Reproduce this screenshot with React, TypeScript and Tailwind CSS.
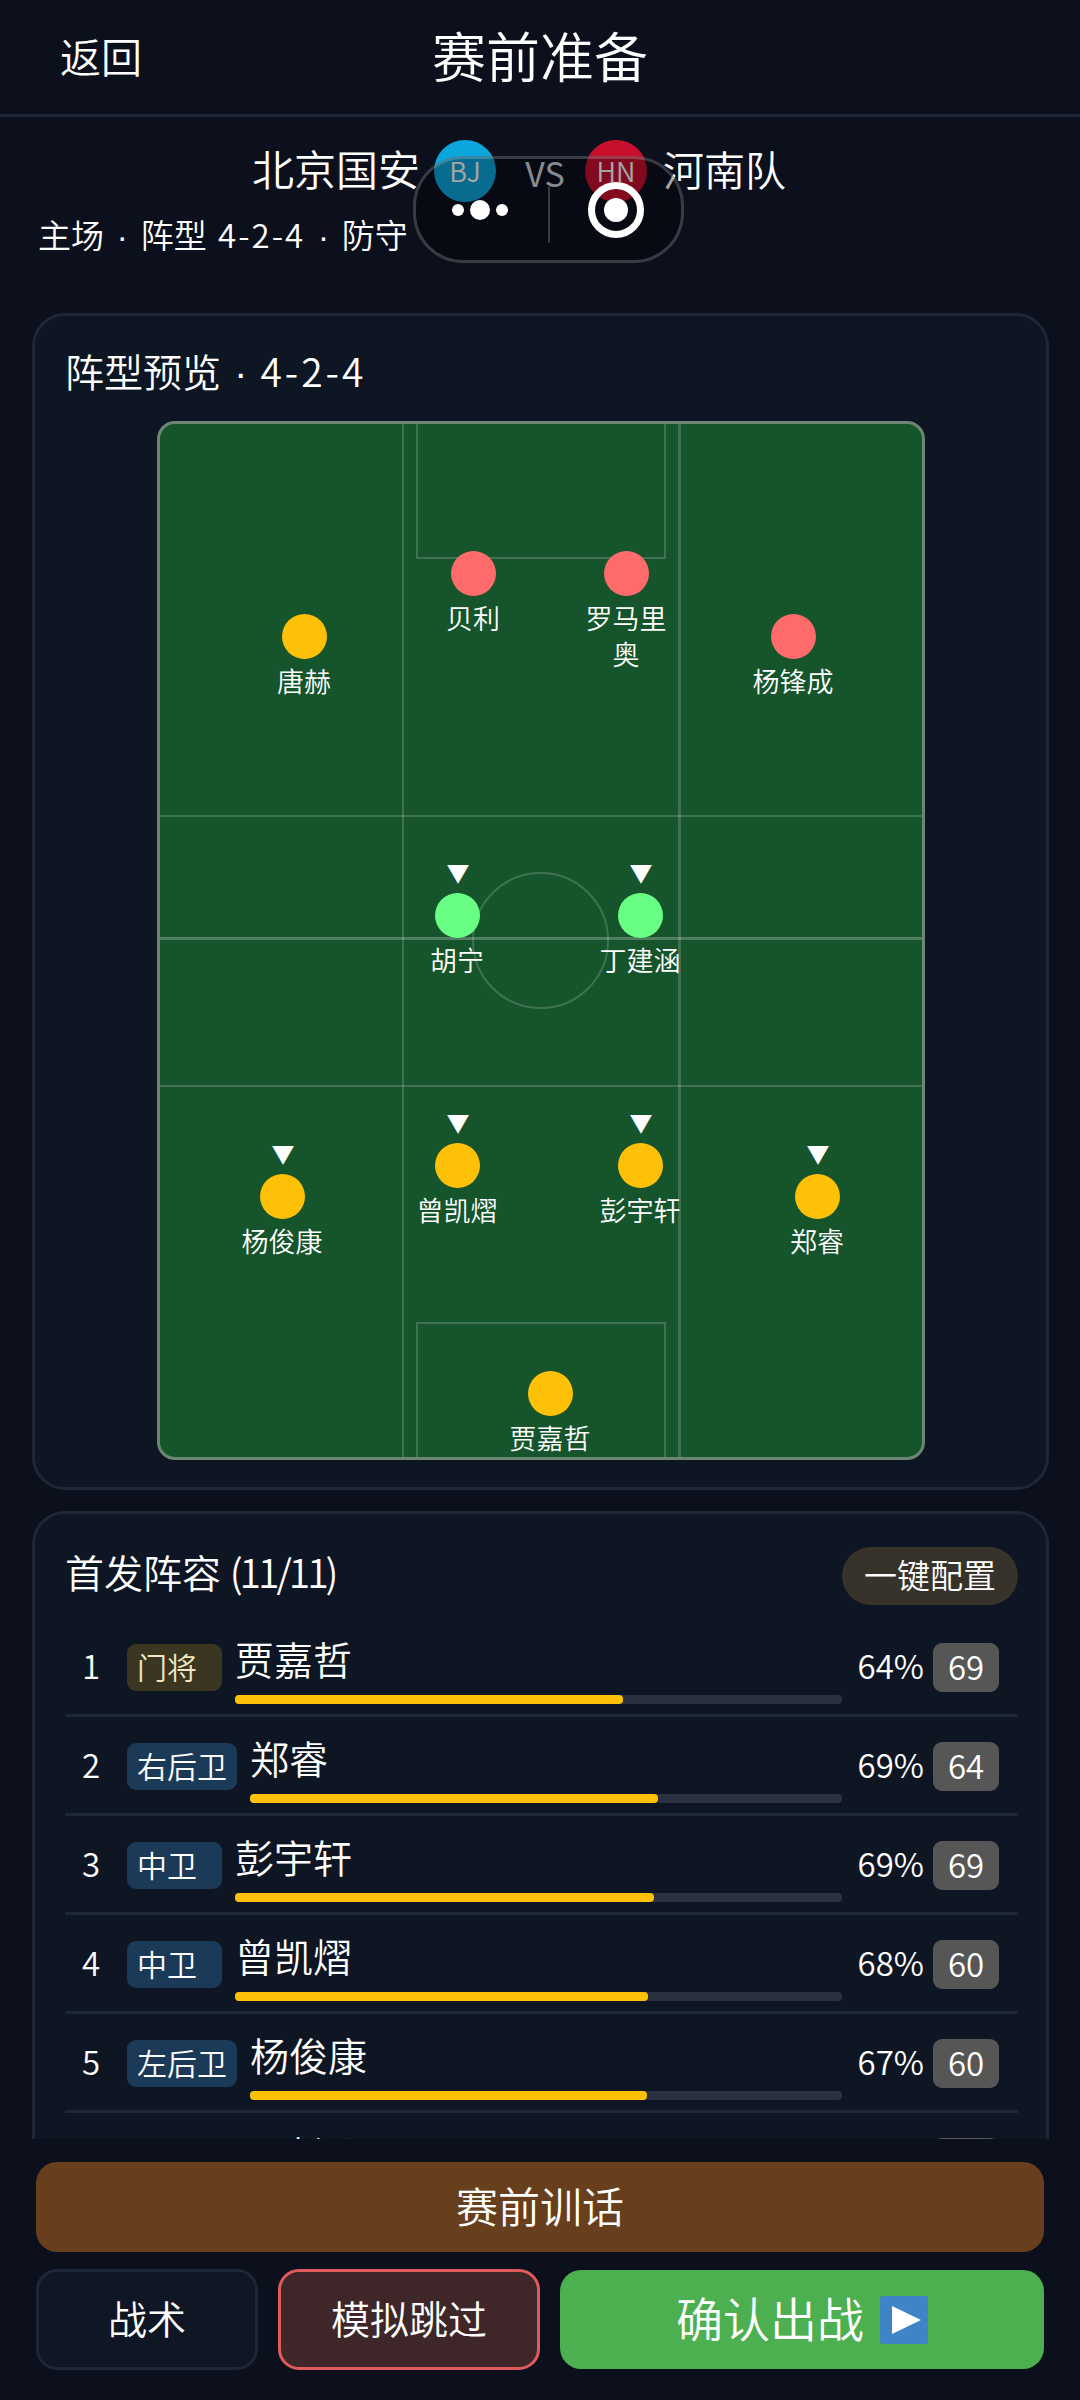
const players = [
  { name: '贝利', x: 473, y: 573, c: 'bg-[#ff6b6b]' },
  { name: '罗马里奥', x: 626, y: 573, c: 'bg-[#ff6b6b]' },
  { name: '唐赫', x: 304, y: 636, c: 'bg-[#ffc107]' },
  { name: '杨锋成', x: 793, y: 636, c: 'bg-[#ff6b6b]' },
  { name: '胡宁', x: 457, y: 915, c: 'bg-[#69ff84]', arrow: true },
  { name: '丁建涵', x: 640, y: 915, c: 'bg-[#69ff84]', arrow: true },
  { name: '杨俊康', x: 282, y: 1196, c: 'bg-[#ffc107]', arrow: true },
  { name: '曾凯熠', x: 457, y: 1165, c: 'bg-[#ffc107]', arrow: true },
  { name: '彭宇轩', x: 640, y: 1165, c: 'bg-[#ffc107]', arrow: true },
  { name: '郑睿', x: 817, y: 1196, c: 'bg-[#ffc107]', arrow: true },
  { name: '贾嘉哲', x: 550, y: 1393, c: 'bg-[#ffc107]' },
];

const rows = [
  { n: 1, pos: '门将', gk: true, name: '贾嘉哲', pct: 64, r: 69 },
  { n: 2, pos: '右后卫', name: '郑睿', pct: 69, r: 64 },
  { n: 3, pos: '中卫', name: '彭宇轩', pct: 69, r: 69 },
  { n: 4, pos: '中卫', name: '曾凯熠', pct: 68, r: 60 },
  { n: 5, pos: '左后卫', name: '杨俊康', pct: 67, r: 60 },
  { n: 6, pos: '中场', name: '丁建涵', pct: 66, r: 62 },
];

function Dot() {
  return <span className="inline-block w-[22px] text-center font-['Liberation_Sans'] leading-none">·</span>;
}

function Player({ p }: { p: (typeof players)[number] }) {
  return (
    <div
      className="absolute flex w-[100px] flex-col items-center"
      style={{ left: p.x - 160 - 50, top: p.y - 424 - 22 }}
    >
      {p.arrow && (
        <span className="absolute -top-[36px] left-[1px] w-full text-center text-[23px] leading-[30px] text-white">▼</span>
      )}
      <div className={`h-[45px] w-[45px] rounded-full ${p.c}`} />
      <div className="mt-[4px] w-[90px] text-center text-[27px] leading-[36px] text-white">{p.name}</div>
    </div>
  );
}

function Row({ r }: { r: (typeof rows)[number] }) {
  return (
    <div className="flex h-[99px] shrink-0 items-center border-b-[3px] border-[#1e2738] pr-[19px] pt-[3px]">
      <div className="-mt-[3px] w-[62px] shrink-0 pl-[17px] text-[33px] text-white">{r.n}</div>
      <div
        className={`h-[47px] min-w-[95px] shrink-0 rounded-[9px] px-[10px] text-[30px] leading-[44px] ${
          r.gk ? 'bg-[#3b3621] text-[#f0e8c0]' : 'bg-[#1b3a58] text-white'
        }`}
      >
        {r.pos}
      </div>
      <div className="ml-[13px] flex min-w-0 flex-1 flex-col self-start pt-[14px]">
        <div className="text-[39px] leading-[46px] text-white">{r.name}</div>
        <div className="mt-[14px] h-[9px] rounded-[4px] bg-[#2a3242]">
          <div className="h-full rounded-[4px] bg-[#ffc107]" style={{ width: `${r.pct}%` }} />
        </div>
      </div>
      <div className="-mt-[3px] ml-[13px] w-[69px] shrink-0 text-right text-[33px] text-white">{r.pct}%</div>
      <div className="ml-[9px] h-[49px] w-[66px] shrink-0 rounded-[9px] bg-[#565656] text-center text-[33px] leading-[46px] text-white">
        {r.r}
      </div>
    </div>
  );
}

export default function App() {
  return (
    <div
      className="relative flex h-[2400px] w-[1080px] flex-col overflow-hidden bg-[#0b101c] font-[350] text-white"
      style={{ fontFamily: '"Noto Sans CJK SC", "Noto Sans", sans-serif' }}
    >
      <header className="relative flex h-[117px] shrink-0 items-center justify-center border-b-[3px] border-[#1e2738]">
        <span className="absolute left-[60px] -mt-[3px] text-[41px]">返回</span>
        <h1 className="-mt-[5px] text-[54px] font-[350]">赛前准备</h1>
      </header>

      <main className="min-h-0 flex-1 overflow-hidden">
        <section className="h-[196px] pt-[23px]">
          <div className="flex h-[62px] items-center pl-[252px]">
            <span className="-mt-[6px] text-[42px] leading-none">北京国安</span>
            <span className="ml-[14px] flex h-[62px] w-[62px] items-center justify-center rounded-full bg-[#0ca6dc] text-[27px]">BJ</span>
            <span className="ml-[29px] mt-[2px] w-[40px] text-center text-[34px] font-normal text-[#cfd6dc]">VS</span>
            <span className="ml-[20px] flex h-[62px] w-[62px] items-center justify-center rounded-full bg-[#c8102e] text-[27px]">HN</span>
            <span className="-mt-[6px] ml-[16px] text-[41px] leading-none">河南队</span>
          </div>
          <div className="mt-[9px] pl-[38px] text-[33px] leading-[46px] text-white">
            主场 <Dot /> 阵型 <span className="ml-[4px] tracking-[2px]">4-2-4</span> <Dot /> 防守
          </div>
        </section>

        <div className="ml-[32px] mr-[31px] h-[1177px] rounded-[33px] border-[3px] border-[#1e2738] bg-[#0f1623] pl-[30px] pr-[28px] pt-[33px]">
          <h2 className="-mt-[3px] text-[39px] font-[350] leading-[48px]">
            阵型预览 <Dot /> <span className="tracking-[3px]">4-2-4</span>
          </h2>
          <div className="relative ml-[92px] mt-[27px] h-[1039px] w-[768px] overflow-hidden rounded-[18px] border-[3px] border-[#6d8674] bg-[#16542b]">
            <div className="absolute inset-y-0 left-[242px] w-[2px] bg-white/[0.18]" />
            <div className="absolute inset-y-0 left-[518px] w-[3px] bg-white/[0.18]" />
            <div className="absolute inset-x-0 top-[391px] h-[2px] bg-white/[0.18]" />
            <div className="absolute inset-x-0 top-[513px] h-[3px] bg-white/25" />
            <div className="absolute inset-x-0 top-[661px] h-[2px] bg-white/[0.18]" />
            <div className="absolute left-[256px] top-0 h-[135px] w-[250px] border-[2px] border-t-0 border-white/[0.18]" />
            <div className="absolute left-[256px] top-[898px] h-[135px] w-[250px] border-[2px] border-b-0 border-white/[0.18]" />
            <div className="absolute left-[312px] top-[448px] h-[137px] w-[137px] rounded-full border-[2px] border-white/[0.18]" />
            {players.map((p) => (
              <Player key={p.name} p={p} />
            ))}
          </div>
        </div>

        <div className="ml-[32px] mr-[31px] mt-[21px] h-[700px] rounded-[33px] border-[3px] border-[#1e2738] bg-[#0f1623] pl-[30px] pr-[28px] pt-[33px]">
          <div className="flex h-[58px] items-center justify-between">
            <h2 className="-mt-[10px] text-[39px] font-[350]">
              首发阵容 <span className="tracking-[-3px]">(11/11)</span>
            </h2>
            <button className="h-[58px] w-[176px] rounded-full bg-[#37332a] pb-[3px] text-center text-[33px] text-white">一键配置</button>
          </div>
          <div className="mt-[13px] flex flex-col">
            {rows.map((r) => (
              <Row key={r.n} r={r} />
            ))}
          </div>
        </div>
      </main>

      <footer className="h-[261px] shrink-0 bg-[#0b101c] px-[36px] pt-[23px]">
        <button className="h-[90px] w-full rounded-[21px] bg-[#683f1d] pb-[5px] text-[42px] text-white">赛前训话</button>
        <div className="mt-[17px] flex h-[101px] items-stretch gap-[20px]">
          <button className="w-[222px] rounded-[21px] border-[3px] border-[#1e2738] bg-[#0f1624] pb-[5px] text-[39px] text-white">战术</button>
          <button className="w-[262px] rounded-[21px] border-[3px] border-[#e05c5c] bg-[#3f2729] pb-[5px] text-[39px] text-white">模拟跳过</button>
          <button className="my-[1px] flex flex-1 items-center justify-center rounded-[21px] bg-[#4caf50] text-[47px] text-white">
            <span className="-mt-[5px]">确认出战</span>
            <svg className="ml-[16px]" width="48" height="48" viewBox="0 0 48 48">
              <rect width="48" height="48" rx="3" fill="#3d85c6" />
              <path d="M12 10 L41 24 L12 38 Z" fill="#fff" />
            </svg>
          </button>
        </div>
      </footer>

      <div className="absolute left-[413px] top-[156px] flex h-[107px] w-[271px] items-center rounded-[50px] border-[3px] border-white/20 bg-black/35">
        <div className="flex w-[128px] items-center justify-center gap-[6px]">
          <i className="h-[12px] w-[12px] rounded-full bg-white" />
          <i className="h-[20px] w-[20px] rounded-full bg-white" />
          <i className="h-[12px] w-[12px] rounded-full bg-white" />
        </div>
        <div className="ml-[4px] mt-[10px] h-[56px] w-[2px] bg-white/20" />
        <div className="flex flex-1 items-center justify-center">
          <div className="flex h-[56px] w-[56px] items-center justify-center rounded-full border-[7px] border-white">
            <div className="h-[24px] w-[24px] rounded-full bg-white" />
          </div>
        </div>
      </div>
    </div>
  );
}
